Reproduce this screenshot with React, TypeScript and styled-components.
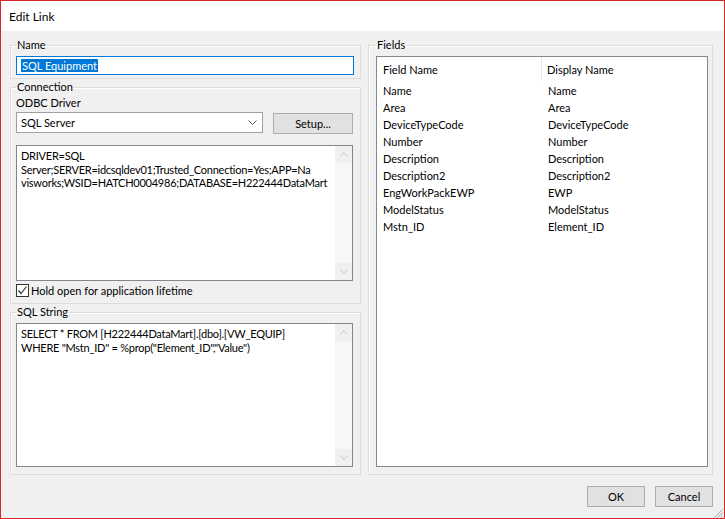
import styled, { createGlobalStyle } from "styled-components";

const GlobalStyle = createGlobalStyle`
    html, body {
        margin: 0;
        padding: 0;
        background: #ffffff;
    }
    * {
        box-sizing: border-box;
    }
`

const fields = [
    ["Name", "Name"],
    ["Area", "Area"],
    ["DeviceTypeCode", "DeviceTypeCode"],
    ["Number", "Number"],
    ["Description", "Description"],
    ["Description2", "Description2"],
    ["EngWorkPackEWP", "EWP"],
    ["ModelStatus", "ModelStatus"],
    ["Mstn_ID", "Element_ID"],
]

const Chevron = (props: { up?: boolean, color: string, width?: number }) => {
    const w = props.width ?? 9
    return (
        <svg width={w} height={5} viewBox="0 0 9 5">
            <path
                d={props.up ? "M0.5 4.5 L4.5 0.5 L8.5 4.5" : "M0.5 0.5 L4.5 4.5 L8.5 0.5"}
                fill="none"
                stroke={props.color}
                strokeWidth={1}
            />
        </svg>
    )
}

const ScrollBar = () => (
    <Scroll>
        <ArrowBox><Chevron up color="#bfbfbf" width={8}/></ArrowBox>
        <ArrowBox><Chevron color="#bfbfbf" width={8}/></ArrowBox>
    </Scroll>
)

export default function App() {
    return (
        <>
            <GlobalStyle/>
            <Window>
                <TitleBar>Edit Link</TitleBar>
                <Body>
                    <Main>
                        <LeftColumn>
                            <Group $padTop={3} $padBottom={3}>
                                <Legend>Name</Legend>
                                <NameInput>
                                    <Selected>SQL Equipment</Selected>
                                </NameInput>
                            </Group>

                            <Group $padTop={0} $padBottom={6}>
                                <Legend>Connection</Legend>
                                <Label>ODBC Driver</Label>
                                <DriverRow>
                                    <Combo>
                                        <span>SQL Server</span>
                                        <Chevron color="#555555"/>
                                    </Combo>
                                    <Button $width={80}>Setup...</Button>
                                </DriverRow>
                                <TextBox $height={136} $top={11}>
                                    <TextContent>
                                        DRIVER=SQL<br/>
                                        Server;SERVER=idcsqldev01;Trusted_Connection=Yes;APP=Na<br/>
                                        visworks;WSID=HATCH0004986;DATABASE=H222444DataMart
                                    </TextContent>
                                    <ScrollBar/>
                                </TextBox>
                                <CheckRow>
                                    <CheckBox>
                                        <svg width={11} height={11} viewBox="0 0 11 11">
                                            <path d="M1.5 5.5 L4 8.5 L9.5 1.5" fill="none" stroke="#333333"
                                                  strokeWidth={1.2}/>
                                        </svg>
                                    </CheckBox>
                                    Hold open for application lifetime
                                </CheckRow>
                            </Group>

                            <Group $padTop={3} $padBottom={7}>
                                <Legend>SQL String</Legend>
                                <TextBox $height={144} $top={0}>
                                    <TextContent>
                                        SELECT * FROM [H222444DataMart].[dbo].[VW_EQUIP]<br/>
                                        WHERE "Mstn_ID" = %prop("Element_ID","Value")
                                    </TextContent>
                                    <ScrollBar/>
                                </TextBox>
                            </Group>
                        </LeftColumn>

                        <FieldsGroup>
                            <Legend>Fields</Legend>
                            <ListView>
                                <HeaderRow>
                                    <HeaderCell>Field Name</HeaderCell>
                                    <HeaderCell $last>Display Name</HeaderCell>
                                </HeaderRow>
                                {fields.map(([name, display]) => (
                                    <Row key={name}>
                                        <Cell>{name}</Cell>
                                        <Cell>{display}</Cell>
                                    </Row>
                                ))}
                            </ListView>
                        </FieldsGroup>
                    </Main>

                    <Footer>
                        <Button $width={58}>OK</Button>
                        <Button $width={58}>Cancel</Button>
                    </Footer>
                    <Grip>
                        <svg width={10} height={10} viewBox="0 0 10 10">
                            <path d="M9.5 1.5 L1.5 9.5 M9.5 4.5 L4.5 9.5 M9.5 7.5 L7.5 9.5" stroke="#a8a8a8"
                                  strokeWidth={1}/>
                        </svg>
                    </Grip>
                </Body>
            </Window>
        </>
    )
}

const Window = styled.div`
    position: relative;
    width: 725px;
    height: 519px;
    border: 1px solid #d8262b;
    display: flex;
    flex-direction: column;
    font-family: Lato, "Liberation Sans", sans-serif;
    font-size: 11px;
    color: #000000;
`

const TitleBar = styled.div`
    height: 30px;
    background: #ffffff;
    padding-left: 8px;
    display: flex;
    align-items: center;
    font-size: 12px;
`

const Body = styled.div`
    position: relative;
    flex: 1;
    background: #f0f0f0;
    padding: 6px 11px 0 9px;
    display: flex;
    flex-direction: column;
`

const Main = styled.div`
    display: flex;
    gap: 7px;
`

const LeftColumn = styled.div`
    width: 351px;
    display: flex;
    flex-direction: column;
`

const Group = styled.fieldset<{ $padTop: number, $padBottom: number }>`
    margin: 0;
    min-width: 0;
    padding: ${p => p.$padTop}px 7px ${p => p.$padBottom}px 5px;
    border: 1px solid #dcdcdc;
    box-shadow: inset 1px 1px 0 #ffffff;
    display: flex;
    flex-direction: column;
`

const Legend = styled.legend`
    margin-left: 0;
    padding: 0 1px;
    line-height: 16px;
    height: 16px;
`

const NameInput = styled.div`
    height: 19px;
    width: 338px;
    margin-right: -1px;
    background: #ffffff;
    border: 1px solid #0078d7;
    display: flex;
    align-items: center;
    padding-left: 4px;
`

const Selected = styled.span`
    background: #0078d7;
    color: #ffffff;
    line-height: 13px;
    padding: 0 1px;
`

const Label = styled.div`
    line-height: 13px;
    height: 13px;
    margin-top: 1px;
`

const DriverRow = styled.div`
    margin-top: 3px;
    display: flex;
    align-items: flex-start;
    justify-content: space-between;
`

const Combo = styled.div`
    width: 247px;
    height: 21px;
    background: #ffffff;
    border: 1px solid #a0a0a0;
    display: flex;
    align-items: center;
    justify-content: space-between;
    padding: 0 5px 0 4px;
`

const Button = styled.div<{ $width: number }>`
    width: ${p => p.$width}px;
    height: 21px;
    margin-top: 1px;
    background: #e1e1e1;
    border: 1px solid #adadad;
    display: flex;
    align-items: center;
    justify-content: center;
`

const TextBox = styled.div<{ $height: number, $top: number }>`
    height: ${p => p.$height}px;
    margin-top: ${p => p.$top}px;
    background: #ffffff;
    border: 1px solid #828790;
    display: flex;
`

const TextContent = styled.div`
    flex: 1;
    min-width: 0;
    overflow: hidden;
    padding: 3px 4px;
    line-height: 13.5px;
    letter-spacing: -0.25px;
    white-space: nowrap;
`

const Scroll = styled.div`
    width: 17px;
    flex-shrink: 0;
    background: #f7f7f7;
    display: flex;
    flex-direction: column;
    justify-content: space-between;
`

const ArrowBox = styled.div`
    height: 17px;
    background: #f0f0f0;
    display: flex;
    align-items: center;
    justify-content: center;
`

const CheckRow = styled.div`
    margin-top: 2px;
    height: 14px;
    display: flex;
    align-items: center;
    gap: 2px;
`

const CheckBox = styled.div`
    width: 13px;
    height: 13px;
    background: #ffffff;
    border: 1px solid #333333;
    display: flex;
    align-items: center;
    justify-content: center;
`

const FieldsGroup = styled.fieldset`
    margin: 0;
    min-width: 0;
    width: 346px;
    padding: 3px 4px 7px 7px;
    border: 1px solid #dcdcdc;
    box-shadow: inset 1px 1px 0 #ffffff;
    display: flex;
    flex-direction: column;
`

const ListView = styled.div`
    flex: 1;
    background: #ffffff;
    border: 1px solid #828790;
`

const HeaderRow = styled.div`
    height: 24px;
    margin-bottom: 1px;
    display: grid;
    grid-template-columns: 165px 1fr;
`

const HeaderCell = styled.div<{ $last?: boolean }>`
    display: flex;
    align-items: center;
    padding-left: ${p => p.$last ? 5 : 6}px;
    ${p => p.$last ? "" : "border-right: 1px solid #e5e5e5;"}
`

const Row = styled.div`
    height: 17px;
    display: grid;
    grid-template-columns: 165px 1fr;
    align-items: center;
`

const Cell = styled.div`
    padding-left: 6px;
`

const Footer = styled.div`
    margin-top: 10px;
    display: flex;
    justify-content: flex-end;
    gap: 10px;
`

const Grip = styled.div`
    position: absolute;
    right: 1px;
    bottom: 1px;
    width: 10px;
    height: 10px;
`
